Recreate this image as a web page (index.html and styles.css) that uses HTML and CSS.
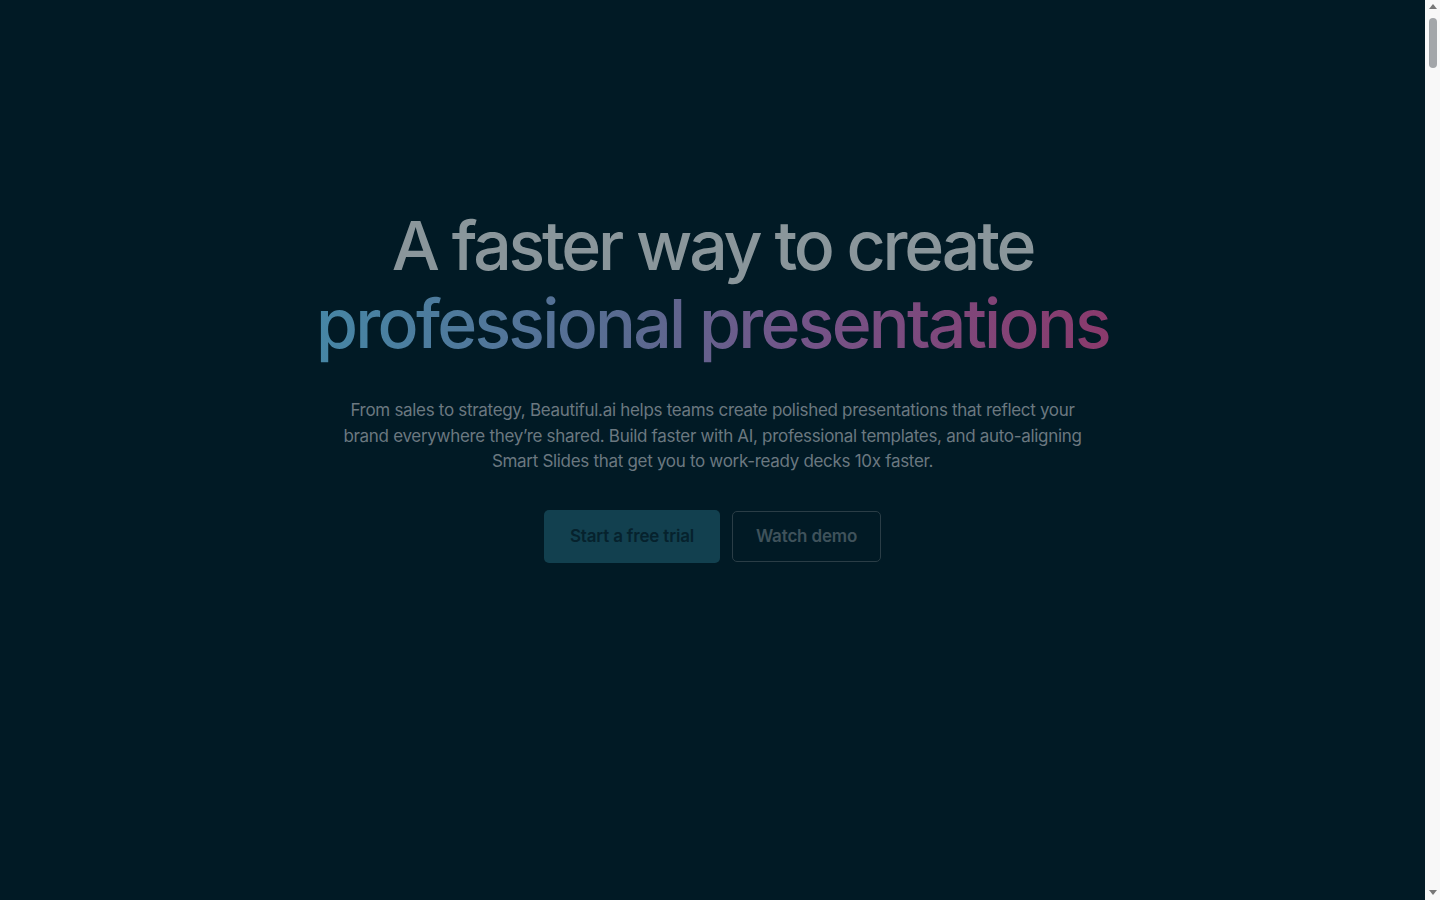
FILE: index.html
```html
<!DOCTYPE html>
<html lang="en">
<head>
<meta charset="utf-8">
<title>Beautiful.ai</title>
<link rel="stylesheet" href="styles.css">
</head>
<body>
<main class="page">
  <section class="hero">
    <h1 class="hero-title">
      <span class="line line-first">A faster way to create</span>
      <span class="line gradient">professional presentations</span>
    </h1>
    <p class="hero-text">From sales to strategy, Beautiful.ai helps teams create polished presentations that reflect your brand everywhere they’re shared. Build faster with AI, professional templates, and auto-aligning Smart Slides that get you to work-ready decks 10x faster.</p>
    <div class="hero-actions">
      <a class="btn btn-primary" href="#">Start a free trial</a>
      <a class="btn btn-outline" href="#">Watch demo</a>
    </div>
  </section>
</main>
<div class="scrollbar" aria-hidden="true">
  <span class="sb-arrow sb-up"></span>
  <span class="sb-thumb"></span>
  <span class="sb-arrow sb-down"></span>
</div>
</body>
</html>
```

FILE: styles.css
```css
html, body {
  margin: 0;
  padding: 0;
  background: #011a25;
}
body {
  font-family: Inter, "Noto Sans", sans-serif;
  color: #6b7880;
  margin-right: 15px;
}
.page {
  min-height: 15600px;
}
.hero {
  display: flex;
  flex-direction: column;
  align-items: center;
  padding-top: 206px;
}
.hero-title {
  margin: 0;
  display: flex;
  flex-direction: column;
  align-items: center;
  font-size: 68px;
  line-height: 78px;
  font-weight: 500;
  letter-spacing: -0.042em;
  color: #8a969b;
  text-align: center;
}
.line-first {
  letter-spacing: -0.047em;
}
.gradient {
  background: linear-gradient(90deg, #4686a5 0%, #5a6a90 40%, #735589 60%, #8a3a6c 100%);
  -webkit-background-clip: text;
  background-clip: text;
  color: transparent;
  letter-spacing: -0.04em;
  padding-bottom: 6px;
}
.hero-text {
  margin: 30px 0 0;
  max-width: 760px;
  text-align: center;
  font-size: 17px;
  line-height: 25.5px;
  color: #6b7880;
  letter-spacing: -0.018em;
}
.hero-actions {
  display: flex;
  gap: 12px;
  align-items: center;
  margin-top: 35px;
}
.btn {
  display: inline-flex;
  align-items: center;
  justify-content: center;
  text-decoration: none;
  font-size: 17px;
  font-weight: 600;
  letter-spacing: -0.01em;
  border-radius: 5px;
  box-sizing: border-box;
}
.btn-primary {
  width: 176px;
  height: 53px;
  background: #12404f;
  color: #06222d;
}
.btn-outline {
  width: 149px;
  height: 51px;
  border: 1px solid #2a3d46;
  color: #3f525b;
}
.scrollbar {
  position: fixed;
  top: 0;
  right: 0;
  width: 15px;
  height: 100vh;
  background: #f8f8f8;
  display: flex;
  flex-direction: column;
  align-items: center;
}
.sb-arrow {
  width: 0;
  height: 0;
  border-left: 4px solid transparent;
  border-right: 4px solid transparent;
}
.sb-up {
  margin-top: 4px;
  border-bottom: 5px solid #777;
}
.sb-thumb {
  margin-top: 9px;
  width: 8px;
  height: 50px;
  border-radius: 4px;
  background: #a3a6a9;
}
.sb-down {
  margin-top: auto;
  margin-bottom: 5px;
  border-top: 5px solid #777;
}
```
